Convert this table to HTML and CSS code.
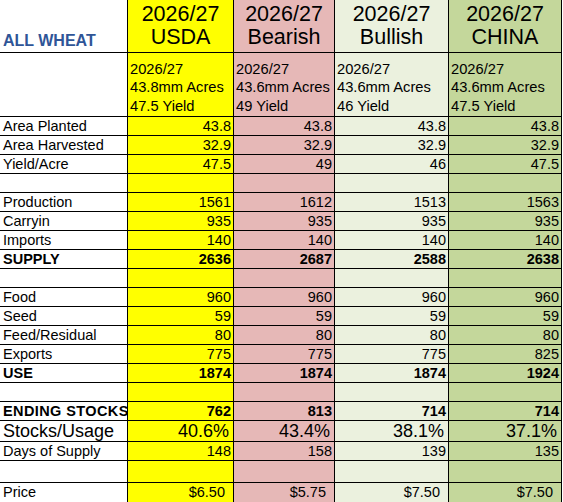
FILE: index.html
```html
<!DOCTYPE html>
<html lang="en">
<head>
    <meta charset="UTF-8">
    <meta name="viewport" content="width=device-width, initial-scale=1.0">
    <title>All Wheat Balance Sheet</title>
    <link rel="stylesheet" href="styles.css">
</head>
<body>

    <div class="sheet">

        <!-- Column headers -->
        <div class="row head">
            <div class="title">ALL WHEAT</div>
            <div>2026/27<br>USDA</div>
            <div>2026/27<br>Bearish</div>
            <div>2026/27<br>Bullish</div>
            <div>2026/27<br>CHINA</div>
        </div>

        <!-- Scenario notes -->
        <div class="row sub">
            <div></div>
            <div>2026/27<br>43.8mm Acres<br>47.5 Yield</div>
            <div>2026/27<br>43.6mm Acres<br>49 Yield</div>
            <div>2026/27<br>43.6mm Acres<br>46 Yield</div>
            <div>2026/27<br>43.6mm Acres<br>47.5 Yield</div>
        </div>

        <div class="row"><div>Area Planted</div><div>43.8</div><div>43.8</div><div>43.8</div><div>43.8</div></div>
        <div class="row"><div>Area Harvested</div><div>32.9</div><div>32.9</div><div>32.9</div><div>32.9</div></div>
        <div class="row"><div>Yield/Acre</div><div>47.5</div><div>49</div><div>46</div><div>47.5</div></div>
        <div class="row"><div></div><div></div><div></div><div></div><div></div></div>

        <!-- Supply -->
        <div class="row"><div>Production</div><div>1561</div><div>1612</div><div>1513</div><div>1563</div></div>
        <div class="row"><div>Carryin</div><div>935</div><div>935</div><div>935</div><div>935</div></div>
        <div class="row"><div>Imports</div><div>140</div><div>140</div><div>140</div><div>140</div></div>
        <div class="row total"><div>SUPPLY</div><div>2636</div><div>2687</div><div>2588</div><div>2638</div></div>
        <div class="row"><div></div><div></div><div></div><div></div><div></div></div>

        <!-- Use -->
        <div class="row"><div>Food</div><div>960</div><div>960</div><div>960</div><div>960</div></div>
        <div class="row"><div>Seed</div><div>59</div><div>59</div><div>59</div><div>59</div></div>
        <div class="row"><div>Feed/Residual</div><div>80</div><div>80</div><div>80</div><div>80</div></div>
        <div class="row"><div>Exports</div><div>775</div><div>775</div><div>775</div><div>825</div></div>
        <div class="row total"><div>USE</div><div>1874</div><div>1874</div><div>1874</div><div>1924</div></div>
        <div class="row"><div></div><div></div><div></div><div></div><div></div></div>

        <!-- Ending stocks -->
        <div class="row total ending"><div>ENDING STOCKS</div><div>762</div><div>813</div><div>714</div><div>714</div></div>
        <div class="row big"><div>Stocks/Usage</div><div>40.6%</div><div>43.4%</div><div>38.1%</div><div>37.1%</div></div>
        <div class="row"><div>Days of Supply</div><div>148</div><div>158</div><div>139</div><div>135</div></div>
        <div class="row gap"><div></div><div></div><div></div><div></div><div></div></div>
        <div class="row price"><div>Price</div><div>$6.50</div><div>$5.75</div><div>$7.50</div><div>$7.50</div></div>

    </div>

</body>
</html>
```

FILE: styles.css
```css
body {
    margin: 0;
    background-color: #fff;
    font-family: "Liberation Sans", Arial, sans-serif;
    color: #000;
}

.sheet {
    width: 562px;
}

.row {
    display: grid;
    grid-template-columns: 128px 106px 101px 114px 113px;
    height: 19px;
}

.row > div {
    box-sizing: border-box;
    border-right: 1px solid #000;
    border-bottom: 1px solid #000;
    padding: 0 2px 0 0;
    font-size: 14.5px;
    line-height: 18px;
    text-align: right;
    white-space: nowrap;
    overflow: hidden;
}

.row > div:nth-child(1) {
    background-color: #fff;
    text-align: left;
    padding-left: 3px;
}

.row > div:nth-child(2) {
    background-color: #ffff00;
}

.row > div:nth-child(3) {
    background-color: #e6b8b7;
}

.row > div:nth-child(4) {
    background-color: #ebf1de;
}

.row > div:nth-child(5) {
    background-color: #c4d79b;
}

/* header rows */
.head {
    height: 53px;
}

.head > div {
    display: flex;
    flex-direction: column;
    justify-content: flex-end;
    padding: 0 0 3px 0;
    font-size: 21.5px;
    line-height: 23px;
    text-align: center;
}

.head > .title {
    font-size: 16px;
    font-weight: bold;
    line-height: 18px;
    color: #2f5597;
    padding-left: 4px;
    padding-bottom: 2px;
}

.sub {
    height: 64px;
}

.sub > div {
    display: flex;
    flex-direction: column;
    justify-content: flex-end;
    text-align: left;
    padding: 0 0 1px 2px;
    font-size: 14.7px;
    line-height: 18.5px;
}

/* body rows */
.total > div {
    font-weight: bold;
}

.ending > div:nth-child(1) {
    letter-spacing: 0.4px;
    text-overflow: clip;
}

.big {
    height: 21px;
}

.big > div {
    font-size: 18px;
    line-height: 20px;
    padding-right: 4px;
}

.gap {
    height: 22px;
}

.price {
    height: 20px;
}

.price > div {
    border-bottom: none;
    padding-right: 8px;
}

.price > div:nth-child(5) {
    border-bottom: 1px solid #3c7a3c;
}
```
